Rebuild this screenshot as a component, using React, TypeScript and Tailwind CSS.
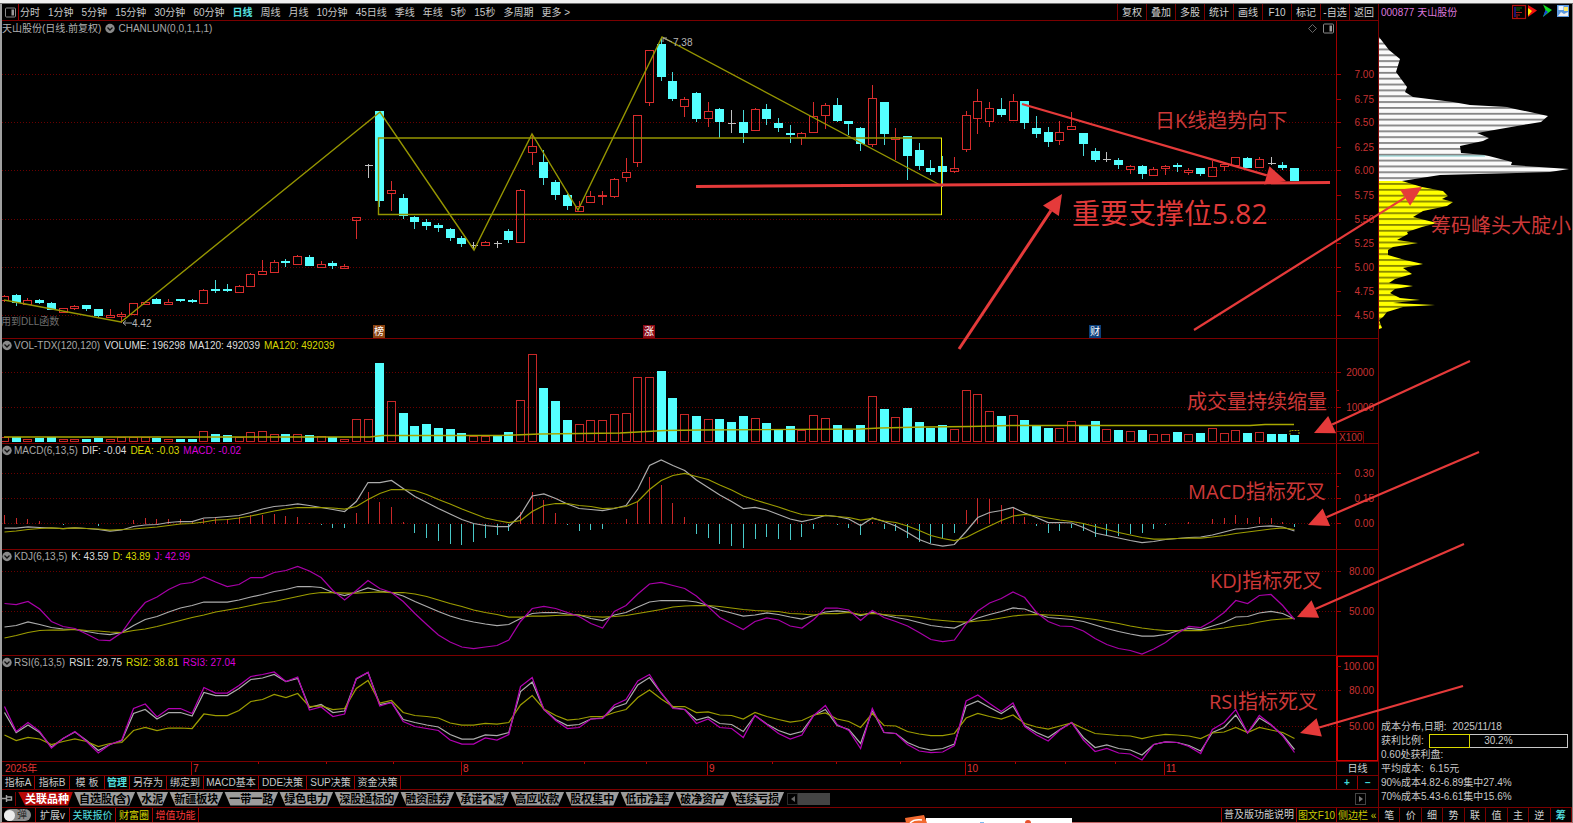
import type { ReactNode } from "react";
import clsx from "clsx";

// kind, high, body top, body bottom, low (r = up, c = down, w = flat)
type Candle = [string, number, number, number, number];

const CANDLES: Candle[] = [
  ["r", 295, 296, 300, 302], ["c", 294, 295, 303, 306], ["r", 298, 300, 304, 304], ["c", 299, 300, 303, 304],
  ["c", 302, 303, 310, 310], ["r", 308, 308, 312, 312], ["r", 305, 306, 308, 310], ["c", 305, 305, 309, 311],
  ["c", 309, 309, 316, 317], ["r", 309, 315, 317, 317], ["r", 312, 314, 316, 323], ["r", 303, 303, 314, 315],
  ["r", 301, 302, 304, 304], ["c", 298, 299, 304, 304], ["r", 299, 302, 304, 304], ["c", 299, 299, 301, 302],
  ["c", 299, 300, 302, 303], ["r", 289, 290, 303, 303], ["c", 280, 289, 291, 293], ["c", 284, 289, 291, 292],
  ["r", 285, 286, 292, 293], ["r", 273, 274, 286, 287], ["r", 260, 271, 274, 275], ["r", 260, 262, 272, 272],
  ["c", 259, 261, 263, 267], ["r", 255, 256, 264, 264], ["c", 255, 257, 266, 266], ["r", 261, 264, 267, 268],
  ["c", 261, 263, 266, 269], ["r", 264, 266, 268, 268], ["r", 217, 217, 220, 239], ["w", 164, 165, 165, 178],
  ["c", 111, 111, 201, 207], ["r", 181, 190, 193, 211], ["c", 194, 198, 216, 219], ["c", 216, 217, 222, 229],
  ["c", 219, 222, 226, 230], ["c", 223, 225, 228, 232], ["c", 228, 229, 238, 241], ["c", 236, 238, 244, 247],
  ["w", 242, 245, 245, 250], ["r", 241, 242, 245, 246], ["w", 241, 243, 243, 248], ["c", 229, 231, 240, 243],
  ["r", 189, 190, 242, 242], ["r", 134, 146, 152, 165], ["c", 150, 162, 178, 185], ["c", 180, 182, 195, 200],
  ["c", 194, 195, 206, 210], ["r", 201, 206, 211, 211], ["r", 191, 196, 202, 202], ["r", 191, 195, 196, 205],
  ["r", 178, 179, 196, 198], ["r", 158, 172, 177, 182], ["r", 115, 115, 162, 167], ["r", 50, 50, 102, 106],
  ["c", 38, 44, 77, 81], ["c", 72, 81, 99, 101], ["r", 97, 99, 106, 117], ["c", 92, 93, 119, 122],
  ["r", 102, 111, 118, 127], ["c", 108, 109, 122, 138], ["w", 110, 123, 123, 133], ["c", 110, 122, 133, 143],
  ["r", 108, 109, 130, 131], ["c", 104, 109, 119, 125], ["c", 118, 123, 128, 132], ["c", 125, 133, 135, 143],
  ["r", 132, 133, 137, 145], ["r", 102, 116, 132, 133], ["r", 103, 105, 115, 129], ["c", 98, 105, 121, 122],
  ["c", 121, 121, 124, 135], ["c", 127, 128, 144, 151], ["r", 85, 98, 144, 147], ["c", 102, 102, 134, 145],
  ["r", 128, 137, 139, 160], ["c", 136, 136, 156, 180], ["c", 143, 150, 166, 170], ["c", 160, 168, 172, 175],
  ["c", 156, 166, 172, 187], ["r", 157, 168, 171, 173], ["r", 111, 115, 149, 152], ["r", 89, 101, 118, 134],
  ["r", 102, 108, 121, 127], ["c", 98, 109, 115, 117], ["r", 94, 101, 120, 121], ["c", 101, 101, 123, 129],
  ["c", 116, 128, 134, 138], ["c", 127, 132, 142, 147], ["r", 121, 132, 140, 145], ["r", 112, 126, 129, 130],
  ["c", 133, 133, 144, 156], ["c", 148, 151, 160, 162], ["w", 152, 159, 159, 162], ["c", 158, 160, 165, 169],
  ["r", 165, 166, 169, 174], ["c", 165, 166, 174, 179], ["r", 167, 169, 175, 176], ["r", 165, 166, 168, 175],
  ["c", 163, 165, 167, 172], ["r", 168, 170, 172, 175], ["c", 168, 168, 174, 176], ["r", 161, 167, 176, 176],
  ["r", 162, 164, 166, 171], ["r", 157, 157, 165, 165], ["c", 157, 158, 168, 168], ["r", 157, 159, 167, 168],
  ["w", 157, 163, 163, 165], ["c", 162, 165, 168, 170], ["c", 168, 168, 181, 181],
];

const VOLUME = [
  437, 437, 439, 438, 437, 439, 439, 439, 438, 439, 437, 437, 437, 438, 439, 439, 439, 431, 434, 435, 437, 432, 431,
  434, 434, 434, 435, 436, 437, 439, 419, 419, 363, 401, 413, 426, 424, 428, 429, 433, 436, 436, 435, 432, 400, 354,
  388, 401, 420, 424, 420, 420, 414, 413, 377, 377, 371, 398, 414, 416, 419, 419, 422, 416, 418, 423, 430, 426, 430,
  415, 418, 425, 430, 425, 396, 409, 417, 408, 422, 428, 425, 429, 390, 394, 411, 416, 415, 420, 425, 428, 428, 421,
  426, 421, 429, 430, 431, 430, 434, 434, 432, 434, 433, 428, 433, 430, 433, 432, 434, 434, 435,
];

// flat days whose volume bar is drawn solid
const SOLID_FLAT = [42, 62, 108];

const DIF = [
  528, 528, 527, 527.5, 528, 528.5, 528, 528.5, 529.5, 531, 530, 526.5, 525, 524.5, 522.5, 521.5, 521.5, 518, 517.5,
  516.5, 515.5, 512.5, 509, 506.5, 505.5, 504, 505.5, 507.5, 509.5, 511.5, 501.5, 482.5, 482.5, 480.5, 488.5, 496.5,
  502.5, 508.5, 514, 519.5, 523.5, 525.5, 526.5, 526.5, 515, 496, 494, 498.5, 504, 508.5, 509.5, 510.5, 508.5, 505.5,
  489, 465.5, 460, 465.5, 470.5, 480, 487.5, 495, 501.5, 508.5, 507.5, 510, 514.5, 519, 521.5, 519, 515.5, 516.5, 519,
  525.5, 518, 521.5, 526, 532.5, 539.5, 544, 546, 544.5, 531.5, 517.5, 512.5, 510.5, 507.5, 513, 517.5, 522.5, 522.5,
  523, 527.5, 533, 535.5, 538, 540.5, 542.5, 541.5, 539.5, 538.5, 537.5, 537, 535, 532, 529, 528.5, 526.5, 526, 527,
  531,
];

const DEA = [
  532, 531, 529.5, 528.5, 528, 528.5, 528, 528.5, 529, 530, 529.5, 529, 528, 527, 525.5, 524, 523.5, 522, 520, 519.5,
  518, 516, 513.5, 511, 509, 507.5, 507.5, 507.5, 508, 509, 506.5, 499.5, 493.5, 489.5, 489.5, 490.5, 494.5, 499.5,
  504, 509, 513.5, 518, 520.5, 522.5, 520.5, 511.5, 505.5, 503.5, 503.5, 505.5, 506.5, 508.5, 508, 506.5, 501.5,
  489.5, 480.5, 475.5, 473.5, 476.5, 479.5, 485, 490, 496, 500, 503.5, 507, 511, 514.5, 515.5, 515.5, 516.5, 517.5,
  520, 518.5, 521, 522.5, 526, 530.5, 535.5, 538.5, 540.5, 537.5, 531.5, 526, 520.5, 516, 514.5, 516, 518, 520, 521.5,
  523.5, 526.5, 529.5, 532.5, 535, 537.5, 539, 539, 538.5, 538, 538, 537, 535.5, 533.5, 532, 530.5, 529, 528, 529.5,
];

const HIST = [
  515, 518, 519, 521, 524, 525, 524, 524, 526, 524, 524, 520, 518, 519, 519, 519, 522, 519, 517, 519, 517, 515, 515,
  514, 516, 517, 523, 525, 528, 528, 513, 492, 502, 507, 522, 533, 538, 541, 544, 545, 542, 538, 535, 531, 512, 492,
  500, 513, 525, 531, 530, 529, 524, 519, 501, 477, 485, 503, 517, 534, 538, 544, 546, 548, 539, 537, 539, 540, 537,
  529, 524, 525, 528, 535, 522, 529, 531, 538, 542, 543, 538, 533, 510, 498, 499, 505, 507, 517, 526, 533, 531, 528,
  531, 537, 536, 536, 534, 533, 529, 525, 524, 522, 524, 519, 518, 515, 518, 517, 518, 522, 527,
];

const K = [
  627, 625.5, 622, 624.5, 627.5, 629, 629.5, 631.5, 633.5, 634.5, 632.5, 625.5, 619.5, 616.5, 612, 608, 605.5, 602,
  602, 602, 600, 597, 594.5, 591.5, 589.5, 586.5, 586.5, 587.5, 592.5, 595.5, 592, 588, 591, 592.5, 596, 601.5, 606.5,
  611.5, 616, 619.5, 622, 624, 625.5, 624.5, 618.5, 613.5, 612.5, 612.5, 614, 615, 618.5, 620.5, 615, 612.5, 607, 602,
  600.5, 600.5, 600.5, 602, 605.5, 610, 613, 616, 615, 613, 614.5, 617, 619, 615.5, 612, 611, 612, 615.5, 612.5, 615,
  617.5, 619.5, 622.5, 625.5, 627, 628, 622.5, 618, 614.5, 611.5, 608, 609, 613.5, 617.5, 618.5, 619.5, 621.5, 625,
  628.5, 631.5, 634, 636, 636, 634.5, 631, 628.5, 629.5, 626, 622.5, 617, 616.5, 613, 611.5, 613.5, 619,
];

const D = [
  638, 635.5, 632.5, 630.5, 630, 630, 629.5, 630.5, 631, 632, 632.5, 630.5, 629, 626.5, 623.5, 620.5, 617.5, 615, 612,
  610, 608, 605.5, 603, 601.5, 599, 596.5, 594, 592.5, 592.5, 593, 593, 592.5, 592, 592.5, 592.5, 594, 596.5, 600,
  603.5, 606.5, 610, 612.5, 614.5, 617, 617, 616, 616, 615.5, 615, 615, 616.5, 617, 616.5, 615.5, 613.5, 611.5, 609.5,
  607, 606, 605.5, 605.5, 606.5, 608, 609.5, 610.5, 611, 611.5, 613.5, 614, 615, 613.5, 613.5, 612.5, 614.5, 613.5,
  614.5, 615.5, 616, 617.5, 619.5, 620.5, 621.5, 622, 621, 620, 618, 616, 615, 614.5, 615, 615.5, 616.5, 618, 619.5,
  621.5, 623.5, 626, 628, 629.5, 630.5, 630.5, 630.5, 630.5, 629.5, 628, 626, 624.5, 622, 620, 619, 618.5,
];

const J = [
  603.5, 604.5, 601.5, 609, 621.5, 626.5, 628.5, 634, 640, 640.5, 632.5, 616, 602.5, 597, 589.5, 584, 582.5, 577, 582,
  586.5, 584.5, 577.5, 577.5, 572.5, 570.5, 566.5, 571, 577.5, 590.5, 600, 590.5, 580.5, 588.5, 592.5, 601.5, 613.5,
  624.5, 635, 642, 647, 648.5, 647, 645.5, 640, 621.5, 608.5, 606.5, 608.5, 612.5, 616.5, 623.5, 628, 611.5, 605.5,
  594, 584, 582.5, 585.5, 588.5, 596, 606.5, 617.5, 623.5, 629.5, 621.5, 618, 620, 626, 628, 619.5, 608, 608, 610,
  620.5, 610.5, 617.5, 621.5, 626, 632.5, 639.5, 641.5, 640, 624, 611, 603, 598.5, 592, 597.5, 612.5, 621.5, 626,
  626.5, 631, 638.5, 644.5, 648.5, 650.5, 654, 649, 642.5, 633.5, 626.5, 627.5, 621, 612.5, 600.5, 603.5, 595.5,
  594.5, 605.5, 619.5,
];

const RSI1 = [
  712.5, 732.5, 725, 732.5, 747, 738.5, 732, 740.5, 750.5, 744.5, 740.5, 713.5, 709.5, 719, 712.5, 712.5, 716, 692.5,
  695.5, 695.5, 688.5, 679.5, 678, 674.5, 681.5, 678.5, 707.5, 704.5, 712.5, 711, 679, 672.5, 704.5, 702.5, 719.5,
  722.5, 725, 727, 734.5, 739, 739, 735, 735.5, 732.5, 691.5, 682, 709.5, 719.5, 725.5, 724.5, 719, 718, 707.5, 703.5,
  685, 677.5, 693, 707.5, 709.5, 720, 717, 723.5, 724.5, 731.5, 715.5, 724, 730.5, 734.5, 731.5, 715.5, 709.5, 725.5,
  729.5, 743.5, 710.5, 732.5, 733.5, 742.5, 747.5, 750, 748.5, 744, 706, 701, 707.5, 713.5, 706, 725.5, 732.5, 737.5,
  729.5, 722.5, 737.5, 747.5, 745, 748.5, 750, 755, 744.5, 742, 742.5, 745.5, 751, 732.5, 727.5, 715, 733, 718, 725,
  735, 749.5,
];

const RSI2 = [
  735, 740.5, 737.5, 739, 744.5, 741.5, 739, 741.5, 746.5, 743.5, 742.5, 730.5, 727.5, 730.5, 728, 728, 728.5, 714,
  715.5, 715.5, 710.5, 701.5, 699.5, 694.5, 697.5, 693.5, 706.5, 706, 709.5, 708.5, 688.5, 680.5, 703, 700.5, 712.5,
  715.5, 716.5, 718, 723, 725, 725, 723.5, 724, 722.5, 705, 695.5, 709, 715.5, 720, 719, 716.5, 716.5, 712.5, 709.5,
  697.5, 690, 699, 706.5, 706.5, 712.5, 712, 715, 715.5, 719, 712.5, 716.5, 719.5, 722, 720.5, 715, 713, 719, 721.5,
  727.5, 713.5, 725.5, 726, 731.5, 734, 735.5, 735.5, 733.5, 718, 713.5, 716.5, 719, 715, 723.5, 727, 729, 726, 723,
  728.5, 733.5, 734.5, 735.5, 736, 738.5, 736, 734.5, 735, 736, 738.5, 733, 732, 727.5, 732.5, 727.5, 730, 732.5,
  738.5,
];

const RSI3 = [
  706.5, 731.5, 722.5, 731.5, 748, 738.5, 731.5, 741.5, 753, 744.5, 740, 708.5, 704, 717, 708.5, 708.5, 713.5, 687.5,
  693, 693, 685.5, 676.5, 674.5, 672, 681.5, 677, 710, 707, 716.5, 714, 678.5, 672.5, 706, 702.5, 721.5, 726.5, 728.5,
  730.5, 740, 744, 744, 738, 740, 734.5, 686.5, 677.5, 709.5, 720.5, 728.5, 727.5, 719, 718.5, 705, 699.5, 681, 674.5,
  693, 708.5, 709.5, 723.5, 719, 727.5, 728.5, 737.5, 715.5, 724.5, 733.5, 739, 735, 715.5, 705.5, 724.5, 730.5,
  748.5, 708.5, 732.5, 733.5, 744.5, 751, 752.5, 752, 745.5, 701, 695, 703.5, 711.5, 703, 726.5, 735, 741, 730, 722.5,
  740, 751.5, 748.5, 753, 754, 760, 744.5, 742, 742.5, 746.5, 753.5, 729.5, 722.5, 709.5, 733, 715.5, 724.5, 736,
  752.5,
];

const barX = (i: number) => 4.5 + i * 11.727;
const snap = (i: number) => Math.floor(barX(i)) + 0.5;

function Curve({ data, color }: { data: number[]; color: string }) {
  return (
    <polyline
      points={data.map((y, i) => `${barX(i).toFixed(1)},${y}`).join(" ")}
      fill="none"
      stroke={color}
      strokeWidth="1.25"
    />
  );
}

function GridLines({ ys }: { ys: number[] }) {
  return (
    <g stroke="#6a0000" strokeDasharray="1 2" shapeRendering="crispEdges">
      {ys.map((y) => (
        <line key={y} x1="2" x2="1336" y1={y + 0.5} y2={y + 0.5} />
      ))}
    </g>
  );
}

interface AxisLabel {
  y: number;
  text: string;
}

interface PanelProps {
  top: number;
  height: number;
  heightClass: string;
  header: ReactNode;
  labels: AxisLabel[];
  minorTicks?: number[];
  boxed?: boolean;
  axisExtra?: ReactNode;
  children: ReactNode;
}

function Panel({
  top,
  height,
  heightClass,
  header,
  labels,
  minorTicks = [],
  boxed,
  axisExtra,
  children,
}: PanelProps) {
  return (
    <section className={clsx("flex border-b border-[#7a0000]", heightClass)}>
      <div className="relative min-w-0 flex-1">
        <svg
          className="block h-full w-full"
          viewBox={`2 ${top} 1334 ${height}`}
          preserveAspectRatio="none"
        >
          {children}
        </svg>
        <div className="absolute inset-x-0 top-0">{header}</div>
      </div>
      <div
        className={clsx(
          "w-[42px] shrink-0 border-l",
          boxed ? "border-[#d00000] ring-1 ring-inset ring-[#d00000]" : "border-[#a00000]",
        )}
      >
        <svg
          className="block h-full w-full"
          viewBox={`1337 ${top} 41 ${height}`}
          preserveAspectRatio="xMinYMin slice"
        >
          {labels.map((l) => (
            <g key={l.text}>
              <path d={`M1337 ${l.y + 0.5}h4`} stroke="#a00000" />
              <text x="1374" y={l.y + 4} textAnchor="end" fill="#c83232">
                {l.text}
              </text>
            </g>
          ))}
          {minorTicks.map((y) => (
            <path key={y} d={`M1337 ${y + 0.5}h2`} stroke="#a00000" />
          ))}
          {axisExtra}
        </svg>
      </div>
    </section>
  );
}

function Chevron() {
  return (
    <svg className="h-[11px] w-[11px] shrink-0" viewBox="0 0 11 11">
      <circle cx="5" cy="5.5" r="4.7" fill="#8a8a8a" />
      <path d="M2.5 4.5 5 7 7.5 4.5" fill="none" stroke="#111" strokeWidth="1.3" />
    </svg>
  );
}

function IndicatorHeader({ name, values }: { name: string; values: [string, string][] }) {
  return (
    <div className="flex h-3 items-center gap-1 whitespace-nowrap">
      <span className="flex items-center gap-px">
        <Chevron />
        <span className="text-[#a8a8a8]">{name}</span>
      </span>
      {values.map(([text, tone], i) => (
        <span key={i} className={tone}>
          {text}
        </span>
      ))}
    </div>
  );
}

function SplitIcon() {
  return (
    <svg className="h-[11px] w-[11px] shrink-0" viewBox="0 0 11 11">
      <rect x="0.5" y="1" width="10" height="9" rx="1" fill="none" stroke="#8a8a8a" />
      <rect x="6.5" y="2.5" width="2.5" height="6" fill="#9a9a9a" />
    </svg>
  );
}

const PERIODS = [
  "分时", "1分钟", "5分钟", "15分钟", "30分钟", "60分钟", "日线", "周线", "月线", "10分钟",
  "45日线", "季线", "年线", "5秒", "15秒", "多周期", "更多 >",
];

const TOOLS = ["复权", "叠加", "多股", "统计", "画线", "F10", "标记", "-自选", "返回"];

function TopBar() {
  return (
    <header className="flex h-[17px] items-stretch border-b border-[#7a0000]">
      <button className="flex w-[17px] items-center justify-center border-r border-[#a00000]" aria-label="布局">
        <SplitIcon />
      </button>
      <nav className="ml-px flex items-center gap-2 whitespace-nowrap">
        {PERIODS.map((p) => (
          <button key={p} className={p === "日线" ? "font-bold text-[#54e0e0]" : "text-[#c8c8c8]"}>
            {p}
          </button>
        ))}
      </nav>
      <div className="ml-auto flex">
        {TOOLS.map((t) => (
          <button key={t} className="w-[29px] whitespace-nowrap border-l border-[#7a0000] text-[#d0d0d0]">
            {t}
          </button>
        ))}
      </div>
    </header>
  );
}

function Flag({ x, label, color }: { x: number; label: string; color: string }) {
  return (
    <g>
      <rect x={x} y="325" width="12" height="13" fill={color} />
      <text x={x + 1} y="335" fill="#fff">
        {label}
      </text>
    </g>
  );
}

const PRICE_LABELS: AxisLabel[] = [
  { y: 74, text: "7.00" },
  { y: 99, text: "6.75" },
  { y: 122, text: "6.50" },
  { y: 147, text: "6.25" },
  { y: 170, text: "6.00" },
  { y: 195, text: "5.75" },
  { y: 219, text: "5.50" },
  { y: 243, text: "5.25" },
  { y: 267, text: "5.00" },
  { y: 291, text: "4.75" },
  { y: 315, text: "4.50" },
];

function PricePanel() {
  return (
    <Panel
      top={21}
      height={317}
      heightClass="h-[318px]"
      labels={PRICE_LABELS}
      header={
        <div className="flex h-3.5 items-center gap-1 whitespace-nowrap">
          <span className="text-[#b0b0b0]">天山股份(日线.前复权)</span>
          <span className="flex items-center gap-0.5 text-[#a8a8a8]">
            <Chevron />
            CHANLUN(0,0,1,1,1)
          </span>
          <span className="ml-auto flex items-center gap-1.5 pr-0.5">
            <svg className="h-[9px] w-[9px]" viewBox="0 0 9 9">
              <path d="M4.5 .5 8.5 4.5 4.5 8.5 .5 4.5Z" fill="none" stroke="#666" />
            </svg>
            <SplitIcon />
          </span>
        </div>
      }
    >
      <GridLines ys={[74, 122, 170, 219, 267, 315]} />
      <g shapeRendering="crispEdges">
        {CANDLES.map(([kind, hi, top, bottom, lo], i) => {
          const x = snap(i);
          if (kind === "c") {
            return (
              <g key={i}>
                <line x1={x} x2={x} y1={hi} y2={lo} stroke="#48dada" />
                <rect x={x - 4.5} y={top} width="9" height={bottom - top} fill="#54ffff" />
              </g>
            );
          }
          if (kind === "w") {
            return <path key={i} d={`M${x} ${hi}V${lo}M${x - 4} ${top + 0.5}h8`} stroke="#c0c0c0" />;
          }
          return (
            <g key={i} stroke="#d82c2c" fill="none">
              <path d={`M${x} ${hi}V${top}M${x} ${bottom}V${lo}`} />
              <rect x={x - 4} y={top + 0.5} width="8" height={Math.max(bottom - top, 1)} />
            </g>
          );
        })}
      </g>
      <g fill="none" stroke="#959500" strokeWidth="1.4">
        <path d="M4 300 121 322 380 112 474 250 532 134 578 210 662 37 942 186" />
        <path d="M942 138H378.5V214.5H942" />
        <path d="M941.5 138V215" stroke="#f0f000" strokeWidth="1" />
      </g>
      <path d="M132 323H123M126 320.5 123 323 126 325.5" stroke="#a0a0a0" fill="none" />
      <text x="132" y="327" fill="#b8b8b8">
        4.42
      </text>
      <path d="M672 42 663 38M663 42V38H667" stroke="#a0a0a0" fill="none" />
      <text x="673" y="46" fill="#b8b8b8">
        7.38
      </text>
      <text x="1" y="325" fill="#6e6e6e">
        用到DLL函数
      </text>
      <Flag x={373} label="榜" color="#8a4210" />
      <Flag x={643} label="涨" color="#8a0a14" />
      <Flag x={1089} label="财" color="#0c3f7a" />
    </Panel>
  );
}

function VolumePanel() {
  return (
    <Panel
      top={339}
      height={104}
      heightClass="h-[105px]"
      labels={[
        { y: 372, text: "20000" },
        { y: 407, text: "10000" },
      ]}
      minorTicks={[390]}
      axisExtra={
        <>
          <path d="M1337 431.5H1363.5V443" fill="none" stroke="#7a0000" />
          <text x="1339" y="441" fill="#c83232">
            X100
          </text>
        </>
      }
      header={
        <IndicatorHeader
          name="VOL-TDX(120,120)"
          values={[
            ["VOLUME: 196298", "text-[#dcdcdc]"],
            ["MA120: 492039", "text-[#dcdcdc]"],
            ["MA120: 492039", "text-[#d8d800]"],
          ]}
        />
      }
    >
      <GridLines ys={[372, 407]} />
      <g shapeRendering="crispEdges">
        {VOLUME.map((y, i) => {
          const x = snap(i);
          const solid = CANDLES[i][0] === "c" || SOLID_FLAT.includes(i);
          return solid ? (
            <rect key={i} x={x - 4.5} y={y} width="9" height={442 - y} fill="#54ffff" />
          ) : (
            <rect key={i} x={x - 4} y={y + 0.5} width="8" height={441 - y} fill="none" stroke="#c82828" />
          );
        })}
      </g>
      <path d="M1290 435V430.5H1299V435" fill="none" stroke="#a0a000" strokeDasharray="2 1" />
      <path
        d="M4 437H370L382 435.5H500L540 434 620 433 665 430.5 700 430 860 429 880 428 925 427 970 426.5 1010 425.5H1250L1265 424.5H1294"
        fill="none"
        stroke="#a8a800"
        strokeWidth="1.4"
      />
    </Panel>
  );
}

function MacdPanel() {
  return (
    <Panel
      top={444}
      height={105}
      heightClass="h-[106px]"
      labels={[
        { y: 473, text: "0.30" },
        { y: 498, text: "0.15" },
        { y: 523, text: "0.00" },
      ]}
      minorTicks={[486, 511]}
      header={
        <IndicatorHeader
          name="MACD(6,13,5)"
          values={[
            ["DIF: -0.04", "text-[#dcdcdc]"],
            ["DEA: -0.03", "text-[#d8d800]"],
            ["MACD: -0.02", "text-[#d800d8]"],
          ]}
        />
      }
    >
      <GridLines ys={[473, 498, 523]} />
      <g shapeRendering="crispEdges">
        {HIST.map((y, i) => (
          <line
            key={i}
            x1={snap(i)}
            x2={snap(i)}
            y1="523.5"
            y2={y}
            stroke={y < 523.5 ? "#c82828" : "#48c8c8"}
          />
        ))}
      </g>
      <Curve data={DIF} color="#acacac" />
      <Curve data={DEA} color="#9c9c00" />
    </Panel>
  );
}

function KdjPanel() {
  return (
    <Panel
      top={550}
      height={105}
      heightClass="h-[106px]"
      labels={[
        { y: 571, text: "80.00" },
        { y: 611, text: "50.00" },
      ]}
      header={
        <IndicatorHeader
          name="KDJ(6,13,5)"
          values={[
            ["K: 43.59", "text-[#dcdcdc]"],
            ["D: 43.89", "text-[#d8d800]"],
            ["J: 42.99", "text-[#d800d8]"],
          ]}
        />
      }
    >
      <GridLines ys={[571, 611]} />
      <Curve data={K} color="#acacac" />
      <Curve data={D} color="#9c9c00" />
      <Curve data={J} color="#a800a8" />
    </Panel>
  );
}

function RsiPanel() {
  return (
    <Panel
      top={656}
      height={105}
      heightClass="h-[106px]"
      boxed
      labels={[
        { y: 666, text: "100.00" },
        { y: 690, text: "80.00" },
        { y: 726, text: "50.00" },
      ]}
      header={
        <IndicatorHeader
          name="RSI(6,13,5)"
          values={[
            ["RSI1: 29.75", "text-[#dcdcdc]"],
            ["RSI2: 38.81", "text-[#d8d800]"],
            ["RSI3: 27.04", "text-[#d800d8]"],
          ]}
        />
      }
    >
      <GridLines ys={[690, 726]} />
      <Curve data={RSI1} color="#acacac" />
      <Curve data={RSI2} color="#9c9c00" />
      <Curve data={RSI3} color="#b400b4" />
    </Panel>
  );
}

const MONTHS: [number, string][] = [
  [191, "7"],
  [461, "8"],
  [707, "9"],
  [965, "10"],
  [1164, "11"],
];
const WEEK_TICKS = [258, 326, 393, 522, 584, 646, 772, 836, 900, 1015, 1065, 1115];

function DateAxis() {
  return (
    <div className="flex h-3.5 border-b border-[#7a0000]">
      <svg className="block h-full min-w-0 flex-1" viewBox="2 762 1334 13" preserveAspectRatio="none">
        <text x="5" y="772" fill="#e03434">
          2025年
        </text>
        {MONTHS.map(([x, label]) => (
          <g key={label}>
            <path d={`M${x + 0.5} 762V775`} stroke="#b00000" />
            <text x={x + 2} y="772" fill="#e03434">
              {label}
            </text>
          </g>
        ))}
        {WEEK_TICKS.map((x) => (
          <path key={x} d={`M${x + 0.5} 762v2`} stroke="#b00000" />
        ))}
      </svg>
      <button className="w-[42px] border-l border-[#a00000] text-[#d0d0d0]">日线</button>
    </div>
  );
}

const TEMPLATES = [
  { label: "指标A", width: "w-[33px]" },
  { label: "指标B", width: "w-[35px]" },
  { label: "模 板", width: "w-[35px]" },
  { label: "管理", width: "w-[25px]" },
  { label: "另存为", width: "w-[37px]" },
  { label: "绑定到", width: "w-[37px]" },
  { label: "MACD基本", width: "w-[55px]" },
  { label: "DDE决策", width: "w-[48px]" },
  { label: "SUP决策", width: "w-[48px]" },
  { label: "资金决策", width: "w-[46px]" },
];

function TemplateBar() {
  return (
    <div className="flex h-3.5 border-b border-[#7a0000]">
      {TEMPLATES.map((t) => (
        <button
          key={t.label}
          className={clsx(
            "whitespace-nowrap border-r border-[#a00000]",
            t.width,
            t.label === "管理" ? "font-bold text-[#54e0e0]" : "text-[#c8c8c8]",
          )}
        >
          {t.label}
        </button>
      ))}
      <div className="ml-auto flex w-[42px] border-l border-[#a00000] font-bold text-[#40d8d8]">
        <button className="flex-1 border-r border-[#a00000]">+</button>
        <button className="flex-1">−</button>
      </div>
    </div>
  );
}

const SECTORS = [
  "自选股(含)", "水泥", "新疆板块", "一带一路", "绿色电力", "深股通标的", "融资融券", "承诺不减",
  "高应收款", "股权集中", "低市净率", "破净资产", "连续亏损",
];

function SectorTabs() {
  return (
    <div className="flex h-[18px] items-center border-b border-[#7a0000] pr-3">
      <button className="flex h-3.5 w-3.5 items-center border-r border-[#7a0000]" aria-label="固定">
        <svg className="h-[9px] w-[11px]" viewBox="0 0 11 9">
          <path d="M0 4.5H4M4.5 1V8M4.5 3H9.5V6H4.5" fill="none" stroke="#a0a0a0" strokeWidth="1.4" />
        </svg>
      </button>
      <nav className="ml-0.5 flex gap-px whitespace-nowrap text-[11px] font-bold leading-[14px]">
        <button className="h-3.5 bg-[#b80808] pl-[7px] pr-1 text-white [clip-path:polygon(0_0,100%_0,calc(100%-5px)_100%,7px_100%)]">
          关联品种
        </button>
        {SECTORS.map((s) => (
          <button
            key={s}
            className="h-3.5 bg-[#9c9c9c] px-[5px] text-black [clip-path:polygon(0_0,100%_0,calc(100%-6px)_100%,6px_100%)]"
          >
            {s}
          </button>
        ))}
      </nav>
      <button
        className="ml-[3px] flex h-3 w-[11px] items-center justify-center border border-[#2c2c2c]"
        aria-label="向左"
      >
        <svg className="h-[6px] w-[4px]" viewBox="0 0 4 6">
          <path d="M4 0V6L0 3Z" fill="#666" />
        </svg>
      </button>
      <div className="h-3 w-8 bg-[#444]" />
      <button
        className="ml-auto flex h-3 w-[11px] items-center justify-center border border-[#444]"
        aria-label="向右"
      >
        <svg className="h-[6px] w-[4px]" viewBox="0 0 4 6">
          <path d="M0 0V6L4 3Z" fill="#777" />
        </svg>
      </button>
    </div>
  );
}

function StatusBar() {
  return (
    <footer className="flex h-3.5 items-stretch whitespace-nowrap">
      <label className="flex w-[34px] items-center border-r border-[#a00000] pl-0.5">
        <input type="checkbox" className="sr-only" />
        <span className="flex h-3 w-[27px] items-center gap-0.5 rounded-full bg-[#8c8c8c]">
          <span className="h-[11px] w-[11px] shrink-0 rounded-full bg-[#ececec]" />
          <span className="leading-none text-[#2c2c2c]">弹</span>
        </span>
      </label>
      <button className="w-[34px] border-r border-[#a00000] text-[#d0d0d0]">扩展v</button>
      <button className="w-[46px] border-r border-[#a00000] text-[#54e0e0]">关联报价</button>
      <button className="w-[37px] border-r border-[#a00000] text-[#d8d800]">财富圈</button>
      <button className="w-[46px] border-r border-[#a00000] text-[#ff3838]">增值功能</button>
      <a href="#help" className="ml-auto w-[75px] border-l border-[#a00000] text-center text-[#d0d0d0]">
        普及版功能说明
      </a>
      <button className="w-10 border-l border-[#a00000] text-[#c8c800]">图文F10</button>
      <button className="w-[42px] overflow-hidden border-l border-[#a00000] pl-px text-left text-[#c8c800]">
        侧边栏 «
      </button>
    </footer>
  );
}

// cost distribution, x is the right edge of the profile at y
const CHIPS_UPPER =
  "1379,37 1389,50 1400,59 1396,72 1407,87 1405,92 1413,97 1453,102 1470,105 1507,107 1515,109 1530,112 1548,116 1541,122 1517,126 1477,133 1489,138 1483,141 1460,146 1461,153 1485,155 1512,162 1511,165 1569,169 1550,172 1440,175 1402,181 1379,181";
const CHIPS_LOWER =
  "1379,181 1402,181 1422,187 1443,191 1448,196 1442,199 1453,202 1447,206 1423,211 1413,217 1437,223 1422,227 1407,232 1408,234 1397,240 1418,243 1393,247 1388,250 1388,255 1405,260 1423,264 1403,268 1412,274 1395,279 1389,283 1413,286 1395,289 1390,293 1400,298 1420,300 1393,303 1435,305 1403,307 1387,312 1383,317 1379,320 1382,328 1379,329";

function HeaderIcons() {
  return (
    <svg className="ml-auto h-4 w-[60px]" viewBox="1512 4 60 16">
      <rect x="1512.5" y="5.5" width="13" height="13" fill="#000" stroke="#b01010" strokeWidth="1.2" />
      <path d="M1515 7V17" stroke="#2020a0" strokeWidth="1.4" />
      <path d="M1516 8h6M1516 10h4" stroke="#0a6a0a" strokeWidth="1.2" />
      <path d="M1516 12.5h6M1516 15h4M1516 17h2" stroke="#b01818" strokeWidth="1.2" />
      <path d="M1528 5 1537 10.5 1528 17Z" fill="#f01010" />
      <path d="M1528 8 1532 11 1528 16Z" fill="#ffe800" />
      <path d="M1543 4.5 1552 10 1543 17 1545.5 10Z" fill="#10e020" />
      <path d="M1543 17 1545.5 10 1548 12Z" fill="#1840e0" />
      <rect x="1557" y="5" width="12" height="12" fill="#5c9ae0" />
      <rect x="1558.5" y="6" width="5" height="4" fill="#e8f4ff" />
      <rect x="1564" y="7" width="4" height="4" fill="#ffe860" />
      <path d="M1558 16 1561 12 1564 14 1568 12V16Z" fill="#f0f0f0" />
    </svg>
  );
}

const SIDE_TABS = ["笔", "价", "细", "势", "联", "值", "主", "逆", "筹"];

function SidePanel() {
  return (
    <aside className="flex w-[194px] shrink-0 flex-col border-l border-[#7a0000]">
      <div className="flex h-4 items-center pl-0.5">
        <h1 className="text-[#dc78dc]">000877 天山股份</h1>
        <HeaderIcons />
      </div>
      <svg className="block h-[310px] w-full" viewBox="1379 20 193 310" preserveAspectRatio="xMinYMin meet">
        <defs>
          <pattern id="chips-upper" width="8" height="5.85" y="48.5" patternUnits="userSpaceOnUse">
            <rect width="8" height="5.85" fill="#fafafa" />
            <rect width="8" height="1.8" fill="#828282" />
          </pattern>
          <pattern id="chips-lower" width="8" height="5.85" y="48.5" patternUnits="userSpaceOnUse">
            <rect width="8" height="5.85" fill="#ffff00" />
            <rect width="8" height="1.8" fill="#868600" />
          </pattern>
        </defs>
        <polygon points={CHIPS_UPPER} fill="url(#chips-upper)" />
        <polygon points={CHIPS_LOWER} fill="url(#chips-lower)" />
        <path d="M1379 156H1485" stroke="#7fd0d0" />
      </svg>
      <dl className="mt-auto flex flex-col whitespace-nowrap pb-[3px] pl-0.5 leading-[14px] text-[#c8c8c8]">
        <div className="flex gap-1.5">
          <dt>成本分布,日期:</dt>
          <dd>2025/11/18</dd>
        </div>
        <div className="flex items-center gap-[5px] pr-1">
          <dt>获利比例:</dt>
          <dd className="relative flex h-3.5 flex-1 items-center justify-center border border-[#c8c8c8]">
            <span className="absolute -inset-y-px -left-px w-[30.2%] border border-[#d8d800]" />
            30.2%
          </dd>
        </div>
        <div className="flex">
          <dt>0.60处获利盘:</dt>
        </div>
        <div className="flex gap-1.5">
          <dt>平均成本:</dt>
          <dd>6.15元</dd>
        </div>
        <div className="flex">
          <dt>90%成本</dt>
          <dd>4.82-6.89集中27.4%</dd>
        </div>
        <div className="flex">
          <dt>70%成本</dt>
          <dd>5.43-6.61集中15.6%</dd>
        </div>
      </dl>
      <div className="grid h-[15px] grid-cols-9 border-t border-[#7a0000]">
        {SIDE_TABS.map((t) => (
          <button
            key={t}
            className={clsx(
              "border-r border-[#7a0000]",
              t === "筹" ? "font-bold text-[#54e0e0]" : "text-[#d0d0d0]",
            )}
          >
            {t}
          </button>
        ))}
      </div>
    </aside>
  );
}

function Arrow({ from, to, width = 2.2 }: { from: [number, number]; to: [number, number]; width?: number }) {
  const angle = Math.atan2(to[1] - from[1], to[0] - from[0]);
  const bx = to[0] - Math.cos(angle) * 20;
  const by = to[1] - Math.sin(angle) * 20;
  const wx = Math.sin(angle) * 9.5;
  const wy = Math.cos(angle) * 9.5;
  return (
    <g>
      <line x1={from[0]} y1={from[1]} x2={bx} y2={by} stroke="#e53a3a" strokeWidth={width} />
      <polygon
        points={`${to[0]},${to[1]} ${bx + wx},${by - wy} ${bx - wx},${by + wy}`}
        fill="#e53a3a"
      />
    </g>
  );
}

const NOTES = [
  { x: 1155, y: 128, text: "日K线趋势向下" },
  { x: 1431, y: 233, text: "筹码峰头大腚小" },
  { x: 1187, y: 409, text: "成交量持续缩量" },
  { x: 1188, y: 499, text: "MACD指标死叉" },
  { x: 1210, y: 588, text: "KDJ指标死叉" },
  { x: 1209, y: 709, text: "RSI指标死叉" },
];

function Annotations() {
  return (
    <svg
      className="pointer-events-none absolute inset-0 h-full w-full font-['Open_Sans','Noto_Sans_CJK_SC',sans-serif]"
      viewBox="0 0 1573 823"
      preserveAspectRatio="none"
    >
      <path d="M696 186.5 1330 182.5" stroke="#e53a3a" strokeWidth="3" />
      <Arrow from={[1022, 104]} to={[1286, 181]} />
      <Arrow from={[959, 349]} to={[1062, 194]} width={3} />
      <Arrow from={[1194, 330]} to={[1422, 187]} />
      <Arrow from={[1470, 361]} to={[1314, 433]} />
      <Arrow from={[1479, 452]} to={[1308, 525]} />
      <Arrow from={[1464, 544]} to={[1297, 617]} />
      <Arrow from={[1463, 686]} to={[1300, 733]} />
      <g className="text-[20px]" fill="#cc3838">
        {NOTES.map((n) => (
          <text key={n.text} x={n.x} y={n.y}>
            {n.text}
          </text>
        ))}
      </g>
      <text x="1072" y="224" className="text-[28px]" fill="#e03a3a">
        重要支撑位5.82
      </text>
      <rect x="926" y="818" width="146" height="5" fill="#fff" />
      <path d="M905 818 924 815 927 823H906Z" fill="#f26a30" />
      <path d="M910 823Q914 819 922 820" fill="none" stroke="#fff" strokeWidth="1.5" />
      <circle cx="1028" cy="823" r="3" fill="#e8502c" />
      <rect x="980" y="822" width="4" height="1" fill="#7ab8f0" />
    </svg>
  );
}

export default function App() {
  return (
    <div className="relative bg-black font-['Liberation_Sans','Noto_Sans_CJK_SC',sans-serif] text-[10px] leading-[13px]">
      <div className="h-1 border-b border-[#707070] bg-[#f0f0f0]" />
      <div className="flex border-b border-l-2 border-r border-b-[#c06060] border-l-[#a0a0a0] border-r-[#808080]">
        <main className="min-w-0 flex-1">
          <TopBar />
          <PricePanel />
          <VolumePanel />
          <MacdPanel />
          <KdjPanel />
          <RsiPanel />
          <DateAxis />
          <TemplateBar />
          <SectorTabs />
          <StatusBar />
        </main>
        <SidePanel />
      </div>
      <Annotations />
    </div>
  );
}
